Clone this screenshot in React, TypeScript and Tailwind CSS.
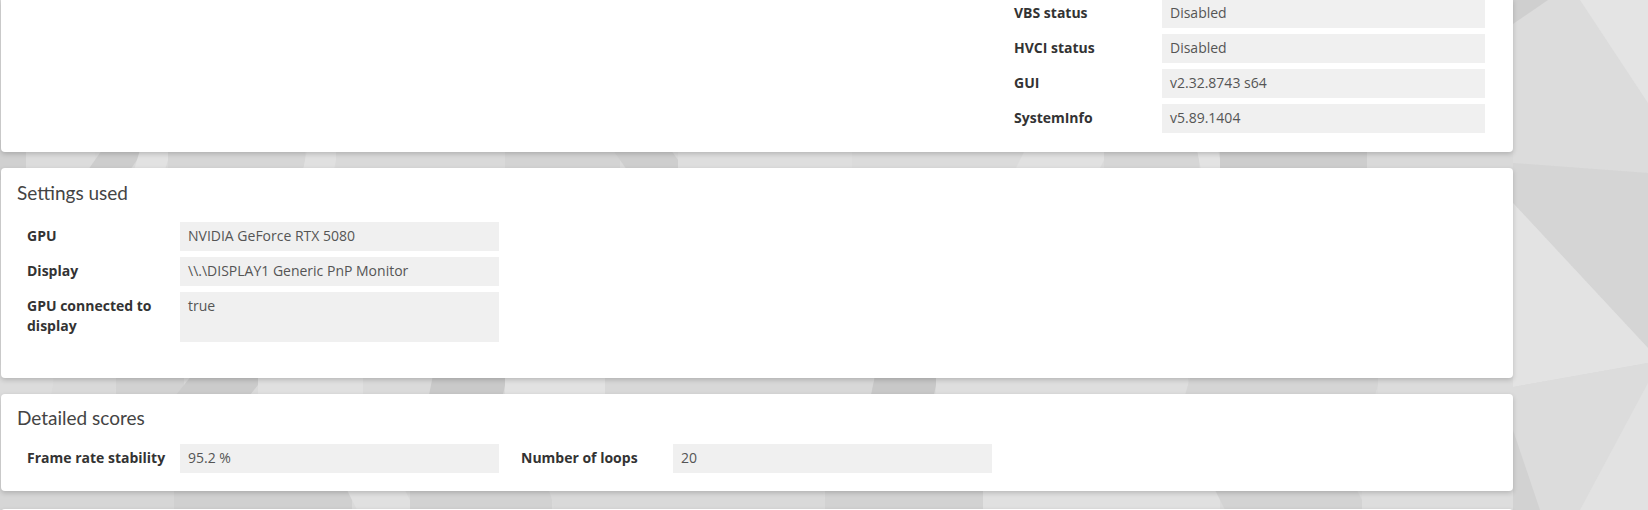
import React from 'react';

type Field = { label: string; value: string; tall?: boolean };

// Facettes du fond (bandes visibles entre les cartes)
const strips: { y0: number; y1: number; bands: [number, number, string, number][] }[] = [
  {
    y0: 140,
    y1: 180,
    bands: [
      [0, 26, '#d0d0d0', 0],
      [26, 95, '#dcdcdc', 0],
      [95, 137, '#cdcdcd', 14],
      [137, 168, '#e2e2e2', 6],
      [168, 305, '#d6d6d6', 0],
      [305, 336, '#e0e0e0', 4],
      [336, 505, '#d9d9d9', 0],
      [505, 620, '#d3d3d3', 0],
      [620, 678, '#cecece', -14],
      [678, 852, '#dedede', 0],
      [852, 1020, '#dbdbdb', 0],
      [1020, 1104, '#e1e1e1', 10],
      [1104, 1199, '#d6d6d6', 0],
      [1199, 1220, '#e3e3e3', -4],
      [1220, 1367, '#cdcdcd', 0],
      [1367, 1514, '#d9d9d9', 0],
    ],
  },
  {
    y0: 365,
    y1: 405,
    bands: [
      [0, 53, '#dcdcdc', 0],
      [53, 116, '#d9d9d9', 4],
      [116, 184, '#d2d2d2', 0],
      [184, 258, '#cbcbcb', 16],
      [258, 363, '#e0e0e0', 0],
      [363, 431, '#dadada', 0],
      [431, 505, '#c9c9c9', 4],
      [505, 605, '#e2e2e2', 0],
      [605, 873, '#d8d8d8', 0],
      [873, 936, '#c8c8c8', 4],
      [936, 1188, '#dedede', 0],
      [1188, 1378, '#d5d5d5', 6],
      [1378, 1514, '#dcdcdc', 0],
    ],
  },
  {
    y0: 480,
    y1: 520,
    bands: [
      [0, 174, '#d6d6d6', 0],
      [174, 352, '#d0d0d0', 0],
      [352, 410, '#e0e0e0', -10],
      [410, 552, '#d2d2d2', 0],
      [552, 825, '#d9d9d9', -6],
      [825, 983, '#d2d2d2', 0],
      [983, 1220, '#e0e0e0', 0],
      [1220, 1362, '#d3d3d3', -10],
      [1362, 1514, '#dddddd', 0],
    ],
  },
];

const Background: React.FC = () => (
  <svg className="absolute inset-0" width="1648" height="510" viewBox="0 0 1648 510">
    <rect width="1648" height="510" fill="#dadada" />
    {strips.map((s, i) =>
      s.bands.map(([x0, x1, c, k], j) => (
        <polygon
          key={`${i}-${j}`}
          points={`${x0 + k},${s.y0} ${x1 + k},${s.y0} ${x1 - k},${s.y1} ${x0 - k},${s.y1}`}
          fill={c}
        />
      ))
    )}
    {/* côté droit */}
    <polygon points="1513,0 1648,0 1648,173 1513,163" fill="#dcdcdc" />
    <polygon points="1513,0 1548,0 1513,24" fill="#cfcfcf" />
    <polygon points="1580,0 1648,0 1648,103" fill="#e4e4e4" />
    <polygon points="1513,163 1648,173 1648,348 1513,203" fill="#d5d5d5" />
    <polygon points="1513,203 1648,348 1648,363 1513,387" fill="#e3e3e3" />
    <polygon points="1513,387 1648,363 1648,510 1513,510" fill="#dcdcdc" />
    <polygon points="1648,383 1648,510 1580,510" fill="#e2e2e2" />
    <polygon points="1513,430 1540,510 1513,510" fill="#d2d2d2" />
  </svg>
);

const Row: React.FC<{ field: Field; labelW: string; valueW: string }> = ({ field, labelW, valueW }) => (
  <div className="flex">
    <div className={`${labelW} shrink-0 pl-[10px] pr-2 pt-[4px] pb-[5px] text-[14px] leading-[20px] font-bold text-[#333]`}>
      {field.label}
    </div>
    <div
      className={`${valueW} shrink-0 bg-[#f0f0f0] px-2 pt-[4px] pb-[5px] text-[14px] leading-[20px] text-[#555] ${
        field.tall ? 'min-h-[50px]' : ''
      }`}
    >
      {field.value}
    </div>
  </div>
);

const Column: React.FC<{ fields: Field[]; labelW: string; valueW: string; width: string }> = ({
  fields,
  labelW,
  valueW,
  width,
}) => (
  <div className={`${width} shrink-0 flex flex-col gap-[6px]`}>
    {fields.map((f) => (
      <Row key={f.label} field={f} labelW={labelW} valueW={valueW} />
    ))}
  </div>
);

const Card: React.FC<{ className?: string; children?: React.ReactNode }> = ({ className = '', children }) => (
  <div className={`bg-white rounded-[4px] shadow-[0_2px_5px_rgba(0,0,0,0.18)] ${className}`}>{children}</div>
);

const Columns: React.FC<{ cols: Field[][] }> = ({ cols }) => (
  <div className="flex gap-[12px] pl-4">
    <Column fields={cols[0] ?? []} width="w-[482px]" labelW="w-[163px]" valueW="w-[319px]" />
    <Column fields={cols[1] ?? []} width="w-[481px]" labelW="w-[162px]" valueW="w-[319px]" />
    <Column fields={cols[2] ?? []} width="w-[481px]" labelW="w-[158px]" valueW="w-[323px]" />
  </div>
);

const Title: React.FC<{ text: string; className?: string }> = ({ text, className = '' }) => (
  <h2 className={`pl-4 text-[19px] leading-[28px] font-normal text-[#444] font-['Lato','Open_Sans',sans-serif] ${className}`}>
    {text}
  </h2>
);

export default function App() {
  const systemInfo: Field[] = [
    { label: 'VBS status', value: 'Disabled' },
    { label: 'HVCI status', value: 'Disabled' },
    { label: 'GUI', value: 'v2.32.8743 s64' },
    { label: 'SystemInfo', value: 'v5.89.1404' },
  ];

  const settings: Field[] = [
    { label: 'GPU', value: 'NVIDIA GeForce RTX 5080' },
    { label: 'Display', value: '\\\\.\\DISPLAY1 Generic PnP Monitor' },
    { label: 'GPU connected to display', value: 'true', tall: true },
  ];

  return (
    <div className="relative h-[510px] w-[1648px] overflow-hidden font-['Open_Sans','Noto_Sans',sans-serif]">
      <Background />
      <div className="relative ml-px w-[1512px] flex flex-col">
        {/* Carte du haut (début coupé) */}
        <Card className="-mt-px pb-[19px] rounded-t-none">
          <Columns cols={[[], [], systemInfo]} />
        </Card>

        {/* Paramètres */}
        <Card className="mt-[16px] pt-[11px] pb-[36px]">
          <Title text="Settings used" className="mb-[15px]" />
          <Columns cols={[settings]} />
        </Card>

        {/* Scores détaillés */}
        <Card className="mt-[16px] pt-[10px] pb-[18px]">
          <Title text="Detailed scores" className="mb-[12px]" />
          <Columns
            cols={[
              [{ label: 'Frame rate stability', value: '95.2 %' }],
              [{ label: 'Number of loops', value: '20' }],
            ]}
          />
        </Card>

        <Card className="mt-[18px] h-[40px]" />
      </div>
    </div>
  );
}
